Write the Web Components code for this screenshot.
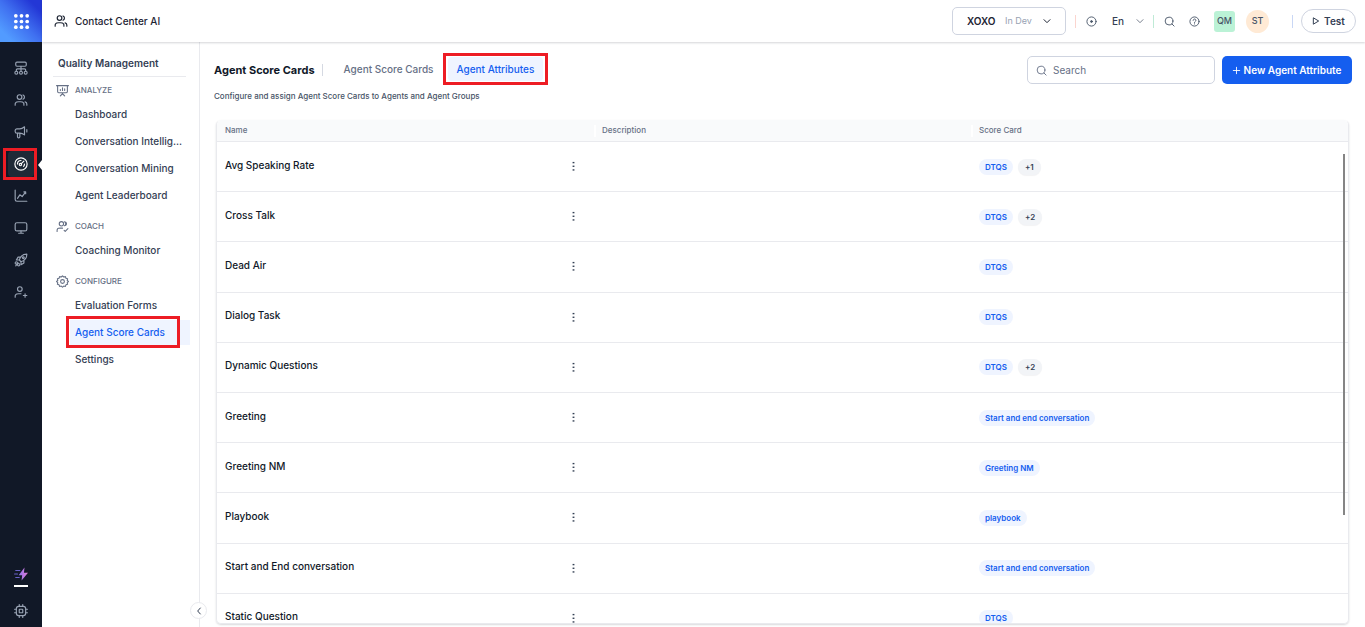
<!DOCTYPE html>
<html lang="en">
<head>
<meta charset="utf-8">
<title>Contact Center AI - Agent Attributes</title>
<style>
  html, body { margin: 0; height: 100%; }
  body {
    font-family: Inter, "Liberation Sans", sans-serif;
    font-size: 10px; line-height: 16px; color: #101828; background: #fff;
    --line: #e9eaee; --border: #cfd4e0; --muted: #667085; --ink: #101828;
    --blue: #155eef; --tint: #eff4ff; --mark: #ed1c24;
  }
</style>
</head>
<body>
<app-shell>
  <app-rail slot="rail">
    <rail-item icon="flow" label="Flows"></rail-item>
    <rail-item icon="users" label="Agents"></rail-item>
    <rail-item icon="megaphone" label="Campaigns"></rail-item>
    <rail-item icon="gauge" label="Quality" current></rail-item>
    <rail-item icon="chart" label="Analytics"></rail-item>
    <rail-item icon="monitor" label="Console"></rail-item>
    <rail-item icon="rocket" label="Deploy"></rail-item>
    <rail-item icon="userplus" label="Invite"></rail-item>
    <rail-item slot="foot" icon="bolt" label="Upgrade" underlined></rail-item>
    <rail-item slot="foot" icon="chip" label="System"></rail-item>
  </app-rail>
  <top-bar slot="top">Contact Center AI</top-bar>
  <side-nav slot="nav" heading="Quality Management">
    <nav-group icon="board" label="ANALYZE">
      <nav-item>Dashboard</nav-item>
      <nav-item>Conversation Intellig...</nav-item>
      <nav-item>Conversation Mining</nav-item>
      <nav-item>Agent Leaderboard</nav-item>
    </nav-group>
    <nav-group icon="usercheck" label="COACH">
      <nav-item>Coaching Monitor</nav-item>
    </nav-group>
    <nav-group icon="gear" label="CONFIGURE">
      <nav-item>Evaluation Forms</nav-item>
      <nav-item current>Agent Score Cards</nav-item>
      <nav-item>Settings</nav-item>
    </nav-group>
  </side-nav>
  <page-heading heading="Agent Score Cards">
    <tab-link slot="tabs">Agent Score Cards</tab-link>
    <tab-link slot="tabs" current>Agent Attributes</tab-link>
    <span slot="about">Configure and assign Agent Score Cards to Agents and Agent Groups</span>
  </page-heading>
  <attribute-table></attribute-table>
</app-shell>

<script>
const define = (name, html, setup) => {
  const template = document.createElement('template');
  template.innerHTML = '<style>*{box-sizing:border-box}button,input,select{font:inherit;color:inherit;margin:0}[hidden]{display:none!important}</style>' + html;
  customElements.define(name, class extends HTMLElement {
    constructor() {
      super();
      this.attachShadow({ mode: 'open' }).append(template.content.cloneNode(true));
    }
    connectedCallback() {
      if (this.ready) return;
      this.ready = true;
      if (setup) setup(this, this.shadowRoot);
    }
  });
};

const ICONS = {
  grid: '<g fill="currentColor" stroke="none"><circle cx="4" cy="4" r="2.6"/><circle cx="12" cy="4" r="2.6"/><circle cx="20" cy="4" r="2.6"/><circle cx="4" cy="12" r="2.6"/><circle cx="12" cy="12" r="2.6"/><circle cx="20" cy="12" r="2.6"/><circle cx="4" cy="20" r="2.6"/><circle cx="12" cy="20" r="2.6"/><circle cx="20" cy="20" r="2.6"/></g>',
  flow: '<rect x="3" y="2" width="18" height="7" rx="2"/><path d="M12 9v8M4 17v-1.500a2 2 0 0 1 2-2h12a2 2 0 0 1 2 2V17"/><circle cx="4" cy="20" r="2.500"/><circle cx="12" cy="20" r="2.500"/><circle cx="20" cy="20" r="2.500"/>',
  users: '<path d="M22 21v-2a4 4 0 0 0-3-3.870M15.500 3.300a4 4 0 0 1 0 7.400M17 21c0-1.860 0-2.800-.3-3.500a4 4 0 0 0-2.200-2.200C13.800 15 12.900 15 11 15H8c-1.900 0-2.800 0-3.500.3a4 4 0 0 0-2.200 2.200C2 18.200 2 19.100 2 21M13.500 7a4 4 0 1 1-8 0 4 4 0 0 1 8 0"/>',
  megaphone: '<path d="M18 3v14c-2.500-2-5-3-8-3H5a3 3 0 0 1-3-3V9.500a3 3 0 0 1 3-3h5c3 0 5.500-1.500 8-3.500zM6 14v6a2 2 0 0 0 4 0v-6M22 8v4"/>',
  gauge: '<circle cx="12" cy="12" r="10.500"/><path d="M12.500 11.500L17 7M6 12a6 6 0 0 1 6-6M18 12a6 6 0 0 1-1.500 4"/><circle cx="11" cy="13" r="2"/>',
  chart: '<path d="M2 2v16c0 2 1 3 3 3h17M6 16l4-6 4 3 6-8M17 5h3v3"/>',
  monitor: '<rect x="2" y="3" width="20" height="14" rx="3"/><path d="M8 21h8M12 17v4"/>',
  rocket: '<path d="M12 15l-3-3c2-6 6-10 13-10 0 7-4 11-10 13zM9 12H4l3-5h5M12 15v5l5-3v-5"/><circle cx="16" cy="8" r="1.500"/><circle cx="4" cy="17" r="2"/><circle cx="8" cy="20" r="2"/><path d="M3 22l4-5"/>',
  userplus: '<path d="M19 21v-6M16 18h6M12 15H8c-1.900 0-2.800 0-3.500.3a4 4 0 0 0-2.200 2.200C2 18.200 2 19.100 2 21"/><circle cx="10" cy="7" r="4"/>',
  usercheck: '<path d="M15 19l2 2 5-5M12 15H8c-1.900 0-2.800 0-3.500.3a4 4 0 0 0-2.200 2.200C2 18.200 2 19.100 2 21M15.500 3.300a4 4 0 0 1 0 7.400M18 4a4 4 0 0 1 0 6"/><circle cx="10" cy="7" r="4"/>',
  bolt: '<defs><linearGradient id="b" x1="0" x2="1" y1="0" y2="0"><stop stop-color="#8a74ec"/><stop offset="1" stop-color="#e77bd8"/></linearGradient></defs><path d="M18 1L8 14h6l-1 9 11-13h-7z" fill="url(#b)" stroke="none"/><path d="M3 6h7M1 12h5M3 18h6" stroke="#6a63c9"/>',
  chip: '<rect x="4" y="4" width="16" height="16" rx="4"/><rect x="9" y="9" width="6" height="6" rx="1"/><path d="M9 1v3M15 1v3M9 20v3M15 20v3M1 9h3M1 15h3M20 9h3M20 15h3"/>',
  board: '<path d="M1 3h22M3 3v11a2 2 0 0 0 2 2h14a2 2 0 0 0 2-2V3M12 16v3M8 22l4-4 4 4M8 12v-2M12 12V7M16 12V9"/>',
  gear: '<path d="M12 1.500l2.300 2.200 3.100-.7 1 3 3 1-.7 3.100L23 12l-2.300 2 .7 3.100-3 1-1 3-3.100-.7L12 22.500l-2.300-2.100-3.100.7-1-3-3-1 .7-3.100L1 12l2.300-1.900L2.600 7l3-1 1-3 3.100.7z"/><circle cx="12" cy="12" r="3.500"/>',
  chevron: '<path d="M3 8l9 9 9-9"/>',
  back: '<path d="M16 3l-8 9 8 9"/>',
  target: '<circle cx="12" cy="12" r="10"/><circle cx="12" cy="12" r="2" fill="currentColor"/>',
  search: '<circle cx="11" cy="11" r="8.500"/><path d="M17.500 17.500L22 22"/>',
  help: '<circle cx="12" cy="12" r="10"/><path d="M9 9.500a3 3 0 1 1 4.500 2.600c-1 .6-1.500 1-1.500 2M12 17v.5"/>',
  play: '<path d="M5 3l15 9-15 9z"/>',
  plus: '<path d="M12 1v22M1 12h22"/>',
  dots: '<g fill="currentColor" stroke="none"><rect x="10" y="2" width="4" height="3"/><rect x="10" y="10" width="4" height="3"/><rect x="10" y="18" width="4" height="3"/></g>'
};

define('ui-icon', `
<style>
  :host { display: block; width: 14px; height: 14px; flex: none; }
  svg { display: block; width: 100%; height: 100%; overflow: visible; fill: none; stroke: currentColor; stroke-width: var(--stroke, 2); stroke-linecap: round; stroke-linejoin: round; }
</style>
<svg viewBox="0 0 24 24" aria-hidden="true"></svg>`, (host, root) => {
  root.querySelector('svg').innerHTML = ICONS[host.getAttribute('name')] || '';
});

define('app-shell', `
<style>
  :host { display: grid; grid-template: 42px minmax(0, 1fr) / 42px 158px minmax(0, 1fr); height: 100vh; overflow: hidden; }
  ::slotted([slot=rail]) { grid-area: 1 / 1 / 3 / 2; }
  ::slotted([slot=top]) { grid-area: 1 / 2 / 2 / 4; }
  main { display: flex; flex-direction: column; min-height: 0; padding: 14px 13px 3px 14px; }
</style>
<slot name="rail"></slot><slot name="top"></slot><slot name="nav"></slot>
<main><slot></slot></main>`);

define('app-rail', `
<style>
  :host { display: flex; flex-direction: column; background: #111827; color: #98a2b3; }
  .home { display: grid; place-items: center; width: 42px; height: 42px; padding: 0; border: 0; color: #fff; background: linear-gradient(45deg, #529bff 15%, #3f6ff0 50%, #2337d6 85%); }
  .home ui-icon { width: 17px; height: 17px; }
  nav { display: flex; flex-direction: column; padding-top: 10px; }
  .foot { margin-top: auto; }
</style>
<button class="home" aria-label="Apps"><ui-icon name="grid"></ui-icon></button>
<nav aria-label="Products"><slot></slot></nav>
<nav class="foot" aria-label="Tools"><slot name="foot"></slot></nav>`);

define('rail-item', `
<style>
  :host { display: block; position: relative; height: 32px; }
  a { display: grid; place-items: center; height: 100%; color: inherit; }
  :host([current]) a { margin: 0 8px; height: 26px; border-radius: 4px; background: #1f2a37; color: #fff; }
  :host([current]) { display: grid; align-items: center; }
  :host([current])::before { content: ""; position: absolute; inset: 0 5px 0 3px; border: 3px solid var(--mark); }
  :host([current])::after { content: ""; position: absolute; right: 0; top: 12px; border: 5px solid transparent; border-left: 0; border-right: 4px solid #fff; }
  :host([underlined]) { height: 37px; padding-top: 5px; box-sizing: border-box; }
  :host([underlined]) a { height: 22px; }
  :host([underlined])::after { content: ""; display: block; width: 14px; height: 2px; margin: 0 auto; background: #fff; }
</style>
<a href="#"></a>`, (host, root) => {
  const link = root.querySelector('a');
  link.setAttribute('aria-label', host.getAttribute('label'));
  link.innerHTML = `<ui-icon name="${host.getAttribute('icon')}"></ui-icon>`;
});

define('top-bar', `
<style>
  :host { position: relative; z-index: 1; display: flex; align-items: center; padding: 0 9px 0 12px; background: #fff; box-shadow: 0 1px 2px rgba(16,24,40,.18); font-weight: 500; color: #1d2433; }
  .brand { display: flex; align-items: center; gap: 7px; margin-right: auto; }
  label { display: flex; align-items: center; }
  select { appearance: none; border: 0; padding: 0; background: none; outline: none; }
  .app { width: 114px; height: 28px; padding: 0 14px; border: 1px solid var(--border); border-radius: 5px; }
  .app select { width: 29px; font-weight: 600; margin-right: 9px; }
  .app span { font-size: 9px; font-weight: 400; color: #98a2b3; }
  .app ui-icon { width: 8px; height: 8px; margin-left: auto; --stroke: 3; }
  hr { width: 1px; height: 13px; margin: 0 0 0 9px; border: 0; background: #fbd5cf; }
  hr.green { background: #bfead6; }
  hr.blue { background: #c9d7f5; margin: 0 8px 0 23px; }
  .icon { display: grid; place-items: center; width: 25px; height: 24px; padding: 0; border: 0; background: none; color: #475467; }
  .icon ui-icon { width: 11px; height: 11px; }
  .target { width: 30px; }
  .find { margin-left: 3px; }
  .lang { width: 32px; margin-left: 6px; color: #344054; }
  .lang select { width: 24px; }
  .lang ui-icon { width: 8px; height: 8px; }
  .avatar { display: grid; place-items: center; width: 21px; height: 21px; margin-left: 7px; border-radius: 3px; background: #bbf2d6; color: #475467; font-size: 9px; }
  .round { width: 23px; height: 23px; margin-left: 11px; border-radius: 50%; background: #ffead5; }
  .test { display: flex; align-items: center; justify-content: center; gap: 4px; width: 55px; height: 24px; padding: 0; border: 1px solid var(--border); border-radius: 12px; background: #fff; font-weight: 600; color: #344054; }
  .test ui-icon { width: 8px; height: 8px; --stroke: 3; }
</style>
<div class="brand"><ui-icon name="users"></ui-icon><slot></slot></div>
<label class="app"><select aria-label="App"><option>XOXO</option></select><span>In Dev</span><ui-icon name="chevron"></ui-icon></label>
<hr>
<button class="icon target" aria-label="Focus"><ui-icon name="target"></ui-icon></button>
<label class="lang"><select aria-label="Language"><option>En</option></select><ui-icon name="chevron"></ui-icon></label>
<hr class="green">
<button class="icon find" aria-label="Search"><ui-icon name="search"></ui-icon></button>
<button class="icon" aria-label="Help"><ui-icon name="help"></ui-icon></button>
<span class="avatar">QM</span><span class="avatar round">ST</span>
<hr class="blue">
<button class="test"><ui-icon name="play"></ui-icon>Test</button>`);

define('side-nav', `
<style>
  :host { position: relative; display: block; border-right: 1px solid var(--line); padding: 13px 9px 0 11px; }
  h2 { margin: 0 4px 5px 0; padding: 0 5px 5px; border-bottom: 1px solid var(--line); font-size: 10px; line-height: 16px; font-weight: 600; color: #344054; }
  button { position: absolute; right: -8px; bottom: 8px; display: grid; place-items: center; width: 17px; height: 17px; padding: 0; border: 1px solid var(--line); border-radius: 50%; background: #fff; color: #344054; }
  ui-icon { width: 8px; height: 8px; --stroke: 3; }
</style>
<h2></h2>
<nav aria-label="Quality Management"><slot></slot></nav>
<button aria-label="Collapse menu"><ui-icon name="back"></ui-icon></button>`, (host, root) => {
  root.querySelector('h2').textContent = host.getAttribute('heading');
});

define('nav-group', `
<style>
  :host { display: block; margin-bottom: 10px; }
  h3 { display: flex; align-items: center; gap: 6px; margin: 0 0 4px; padding-left: 3px; font-size: 8px; line-height: 16px; font-weight: 500; color: var(--muted); }
  ui-icon { width: 13px; height: 13px; --stroke: 2; }
  .items { display: grid; gap: 2px; }
</style>
<h3></h3>
<div class="items"><slot></slot></div>`, (host, root) => {
  root.querySelector('h3').innerHTML = `<ui-icon name="${host.getAttribute('icon')}"></ui-icon>${host.getAttribute('label')}`;
});

define('nav-item', `
<style>
  :host { display: block; position: relative; margin-left: 17px; }
  a { display: block; padding-left: 5px; line-height: 25px; font-weight: 500; color: #344054; text-decoration: none; white-space: nowrap; }
  :host([current]) a { background: var(--tint); color: var(--blue); }
  :host([current])::after { content: ""; position: absolute; inset: -4px 10px -3px -4px; border: 3px solid var(--mark); }
</style>
<a href="#"><slot></slot></a>`);

define('tab-link', `
<style>
  :host { display: block; position: relative; }
  a { display: block; padding: 0 9px; line-height: 24px; border-radius: 4px; font-weight: 500; color: var(--muted); text-decoration: none; }
  :host([current]) a { background: var(--tint); color: var(--blue); }
  :host([current])::after { content: ""; position: absolute; inset: -4px -5px; border: 3px solid var(--mark); }
</style>
<a href="#"><slot></slot></a>`);

define('page-heading', `
<style>
  :host { display: block; }
  .row { display: flex; align-items: center; height: 28px; }
  h1 { margin: 0; padding-right: 7px; font-size: 11px; line-height: 16px; font-weight: 700; white-space: nowrap; }
  hr { width: 1px; height: 12px; margin: 0 12px 0 0; border: 0; background: #d5d9e2; }
  .tabs { display: flex; gap: 5px; height: 24px; margin-bottom: 2px; white-space: nowrap; }
  .search { display: flex; align-items: center; gap: 6px; width: 188px; min-width: 0; height: 28px; margin-left: auto; padding: 0 8px; border: 1px solid var(--border); border-radius: 5px; color: var(--muted); }
  .search ui-icon { width: 11px; height: 11px; }
  input { width: 100%; min-width: 0; border: 0; padding: 0; outline: none; background: none; }
  input::placeholder { color: var(--muted); opacity: 1; }
  button { display: flex; align-items: center; justify-content: center; gap: 4px; width: 130px; height: 28px; margin-left: 7px; padding: 0; border: 0; border-radius: 5px; background: var(--blue); color: #fff; font-weight: 600; white-space: nowrap; }
  button ui-icon { width: 7px; height: 7px; --stroke: 3; }
  p { margin: 4px 0 16px; font-size: 8px; line-height: 16px; font-weight: 500; color: #475467; }
</style>
<div class="row">
  <h1></h1><hr>
  <nav class="tabs" aria-label="Views"><slot name="tabs"></slot></nav>
  <label class="search"><ui-icon name="search"></ui-icon><input type="search" placeholder="Search" aria-label="Search"></label>
  <button><ui-icon name="plus"></ui-icon>New Agent Attribute</button>
</div>
<p><slot name="about"></slot></p>`, (host, root) => {
  root.querySelector('h1').textContent = host.getAttribute('heading');
});

define('score-tag', `
<style>
  :host { display: inline-block; padding: 0 6px; border-radius: 8px; background: var(--tint); color: var(--blue); font-size: 8px; line-height: 16px; font-weight: 600; white-space: nowrap; }
  :host([more]) { padding: 0 7px; margin-left: 5px; background: #f2f4f7; color: #344054; box-shadow: 0 1px 1px rgba(16,24,40,.05); }
</style>
<slot></slot>`);

define('attribute-table', `
<style>
  :host { position: relative; display: block; flex: 1; min-height: 0; margin: 0 3px 0 2px; border: 1px solid var(--line); border-top-color: #f9fafb; border-radius: 5px; box-shadow: 0 1px 2px rgba(16,24,40,.16); overflow: hidden; }
  .view { height: 100%; overflow-y: auto; scrollbar-width: none; }
  table { width: 100%; height: 523px; table-layout: fixed; border-collapse: separate; border-spacing: 0; }
  th { position: relative; height: 21px; padding: 0 8px 2px; border-bottom: 1px solid var(--line); background: #f9fafb; text-align: left; font-size: 8px; line-height: 16px; font-weight: 500; color: var(--muted); }
  th + th::before { content: ""; position: absolute; left: 0; top: 4px; width: 2px; height: 12px; background: #fff; }
  td { padding: 0 8px; border-bottom: 1px solid var(--line); font-weight: 500; }
  .name { display: flex; align-items: center; justify-content: space-between; padding-right: 7px; }
  .name span { padding-bottom: 4px; }
  button { display: grid; place-items: center; width: 12px; height: 14px; padding: 0; border: 0; background: none; color: #344054; }
  button ui-icon { width: 11px; height: 11px; }
  .tags { display: flex; }
  .thumb { position: absolute; right: 3px; top: 33px; width: 2px; height: 72%; background: #858585; }
</style>
<div class="view"><table>
  <thead><tr><th scope="col">Name</th><th scope="col">Description</th><th scope="col">Score Card</th></tr></thead>
  <tbody></tbody>
</table></div>
<div class="thumb"></div>`, (host, root) => {
  const rows = [
    ['Avg Speaking Rate', 'DTQS', '+1'],
    ['Cross Talk', 'DTQS', '+2'],
    ['Dead Air', 'DTQS'],
    ['Dialog Task', 'DTQS'],
    ['Dynamic Questions', 'DTQS', '+2'],
    ['Greeting', 'Start and end conversation'],
    ['Greeting NM', 'Greeting NM'],
    ['Playbook', 'playbook'],
    ['Start and End conversation', 'Start and end conversation'],
    ['Static Question', 'DTQS']
  ];
  root.querySelector('tbody').innerHTML = rows.map(([name, card, more]) => `
    <tr><td><div class="name"><span>${name}</span><button aria-label="Options for ${name}"><ui-icon name="dots"></ui-icon></button></div></td><td></td>
    <td><div class="tags"><score-tag>${card}</score-tag>${more ? `<score-tag more>${more}</score-tag>` : ''}</div></td></tr>`).join('');
});
</script>
</body>
</html>
